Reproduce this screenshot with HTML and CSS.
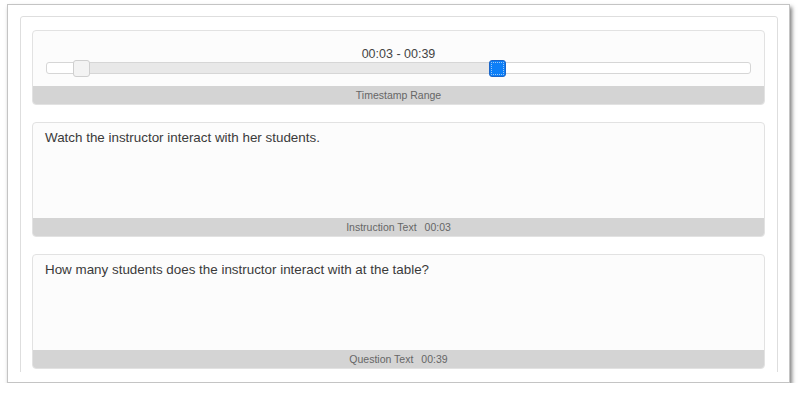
FILE: index.html
```html
<!DOCTYPE html>
<html>
<head>
<meta charset="utf-8">
<link rel="stylesheet" href="styles.css">
</head>
<body>
<div class="frame">
  <div class="clip">
    <div class="panel">
      <div class="card card-range">
        <div class="range-body">
          <div class="range-label">00:03 - 00:39</div>
          <div class="track">
            <div class="fill"></div>
            <div class="handle handle-a"></div>
            <div class="handle handle-b"></div>
          </div>
        </div>
        <div class="card-foot">Timestamp Range</div>
      </div>
      <div class="card card-text">
        <div class="text-body">Watch the instructor interact with her students.</div>
        <div class="card-foot">Instruction Text<span class="time">00:03</span></div>
      </div>
      <div class="card card-text">
        <div class="text-body">How many students does the instructor interact with at the table?</div>
        <div class="card-foot">Question Text<span class="time">00:39</span></div>
      </div>
      <div class="card card-text"></div>
    </div>
  </div>
</div>
</body>
</html>
```
FILE: styles.css
```css
html, body {
  margin: 0;
  padding: 0;
  background: #ffffff;
  font-family: "Liberation Sans", Arial, sans-serif;
}
body {
  padding: 4px 0 0 7px;
}
.frame {
  width: 783px;
  height: 379px;
  border: 1px solid #c4c4c4;
  background: #ffffff;
  box-shadow: 2px 3px 4px rgba(0, 0, 0, 0.5);
  padding: 11px 11px 0 12px;
  box-sizing: border-box;
}
.clip {
  height: 356px;
  overflow: hidden;
}
.panel {
  border: 1px solid #dedede;
  border-radius: 3px;
  padding: 13px 12px 0 11px;
  display: flex;
  flex-direction: column;
  gap: 17px;
}
.card {
  border: 1px solid #e2e2e2;
  border-radius: 4px;
  background: #fcfcfc;
  overflow: hidden;
  display: flex;
  flex-direction: column;
}
.card-range {
  height: 75px;
  box-sizing: border-box;
}
.range-body {
  flex: 1;
  padding: 16px 13px 0 13px;
}
.range-label {
  font-size: 12.5px;
  line-height: 14px;
  color: #444;
  text-align: center;
}
.track {
  position: relative;
  height: 12px;
  box-sizing: border-box;
  border: 1px solid #d6d6d6;
  border-radius: 3px;
  background: #ffffff;
  margin-top: 1px;
}
.fill {
  position: absolute;
  left: 35px;
  width: 416px;
  top: 0;
  bottom: 0;
  background: #e8e8e8;
}
.handle {
  position: absolute;
  top: -3px;
  width: 17px;
  height: 17px;
  box-sizing: border-box;
  border-radius: 3px;
}
.handle-a {
  left: 26px;
  background: #f3f3f3;
  border: 1px solid #cfcfcf;
}
.handle-b {
  left: 442px;
  background: #0d7ff7;
  border: 1px solid #1b66c9;
  outline: 1px dotted #9cc6f5;
  outline-offset: -3px;
}
.card-foot {
  height: 18px;
  background: #d4d4d4;
  color: #666;
  font-size: 10.5px;
  line-height: 18px;
  text-align: center;
  flex-shrink: 0;
}
.time {
  margin-left: 8px;
}
.card-text {
  height: 115px;
  box-sizing: border-box;
}
.text-body {
  flex: 1;
  padding: 5px 12px;
  font-size: 13.4px;
  line-height: 20px;
  color: #3a3a3a;
}
```
